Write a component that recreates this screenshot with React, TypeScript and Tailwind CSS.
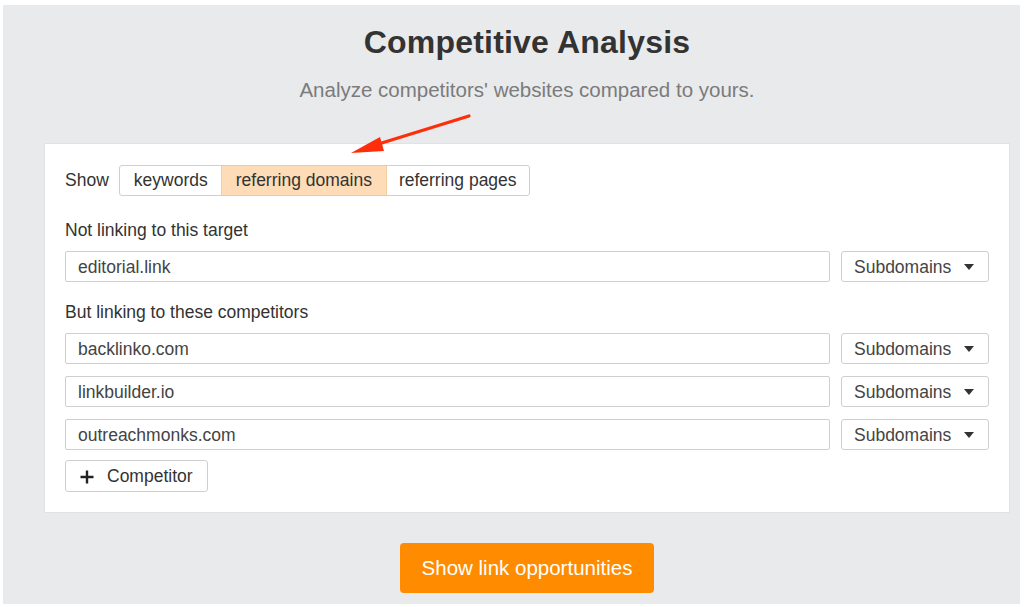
import React from "react";

const font = { fontFamily: '"Liberation Sans", Arial, sans-serif' };

function Caret() {
  return (
    <svg width="10" height="6" viewBox="0 0 10 6" className="ml-auto">
      <path d="M0 0 L10 0 L5 6 Z" fill="#333" />
    </svg>
  );
}

function Row({ value }: { value: string }) {
  return (
    <div className="flex gap-[11px]">
      <div className="flex-1 h-[31px] border border-[#cfcfcf] rounded-[2px] flex items-center pt-[1px] px-[12px] text-[17.5px] text-[#444] bg-white">
        {value}
      </div>
      <div className="w-[148px] h-[31px] border border-[#cfcfcf] rounded-[3px] flex items-center pt-[1px] pl-[12px] pr-[14px] text-[17.5px] text-[#444] bg-white">
        Subdomains
        <Caret />
      </div>
    </div>
  );
}

export default function App() {
  return (
    <div
      className="relative w-[1024px] h-[607px] bg-white pt-[5px] pl-[3px] pr-[4px] pb-[3px] overflow-hidden"
      style={font}
    >
      <div className="h-full bg-[#e9eaec] pl-[41px] pr-[10px] flex flex-col items-center">
        <h1 className="mt-[17px] h-[40px] leading-[40px] text-[32px] font-bold text-[#333] tracking-[0.2px]">
          Competitive Analysis
        </h1>
        <p className="mt-[16px] h-[24px] leading-[24px] text-[20.5px] text-[#7b7b7b]">
          Analyze competitors' websites compared to yours.
        </p>
        <div className="mt-[41px] w-full bg-white border border-[#e2e2e2] p-[20px]">
          <div className="flex items-center h-[31px] pt-[1px]">
            <span className="text-[17.5px] text-[#333] mr-[10px]">Show</span>
            <div className="flex h-[31px] border border-[#cfcfcf] rounded-[3px] overflow-hidden text-[17.5px] text-[#333]">
              <div className="pl-[14px] pr-[13px] flex items-center">keywords</div>
              <div className="px-[14px] flex items-center bg-[#fddcb7] border-l border-r border-[#f3cda4]">
                referring domains
              </div>
              <div className="px-[12px] flex items-center">referring pages</div>
            </div>
          </div>
          <div className="mt-[22px] h-[24px] leading-[24px] pt-[1px] text-[17.5px] text-[#333]">
            Not linking to this target
          </div>
          <div className="mt-[10px]">
            <Row value="editorial.link" />
          </div>
          <div className="mt-[17px] h-[24px] leading-[24px] pt-[1px] text-[17.5px] text-[#333]">
            But linking to these competitors
          </div>
          <div className="mt-[10px] flex flex-col gap-[12px]">
            <Row value="backlinko.com" />
            <Row value="linkbuilder.io" />
            <Row value="outreachmonks.com" />
          </div>
          <div className="mt-[10px] flex">
            <div className="h-[32px] border border-[#cfcfcf] rounded-[3px] flex items-center pt-[1px] pl-[14px] pr-[14px] text-[17.5px] text-[#333]">
              <svg width="14" height="14" viewBox="0 0 14 14" className="mr-[13px]">
                <path d="M7 0.5 V13.5 M0.5 7 H13.5" stroke="#222" strokeWidth="2.4" />
              </svg>
              Competitor
            </div>
          </div>
        </div>
        <button className="mt-[30px] w-[254px] h-[50px] rounded-[4px] bg-[#ff8b00] text-white text-[20.5px]">
          Show link opportunities
        </button>
      </div>
      <svg
        className="absolute left-0 top-0 pointer-events-none"
        width="1024"
        height="607"
        viewBox="0 0 1024 607"
      >
        <path d="M469 116 L372 146" stroke="#ff2e0a" strokeWidth="3.2" strokeLinecap="round" />
        <path d="M351 153 L380 137 L384 151 Z" fill="#ff2e0a" />
      </svg>
    </div>
  );
}
